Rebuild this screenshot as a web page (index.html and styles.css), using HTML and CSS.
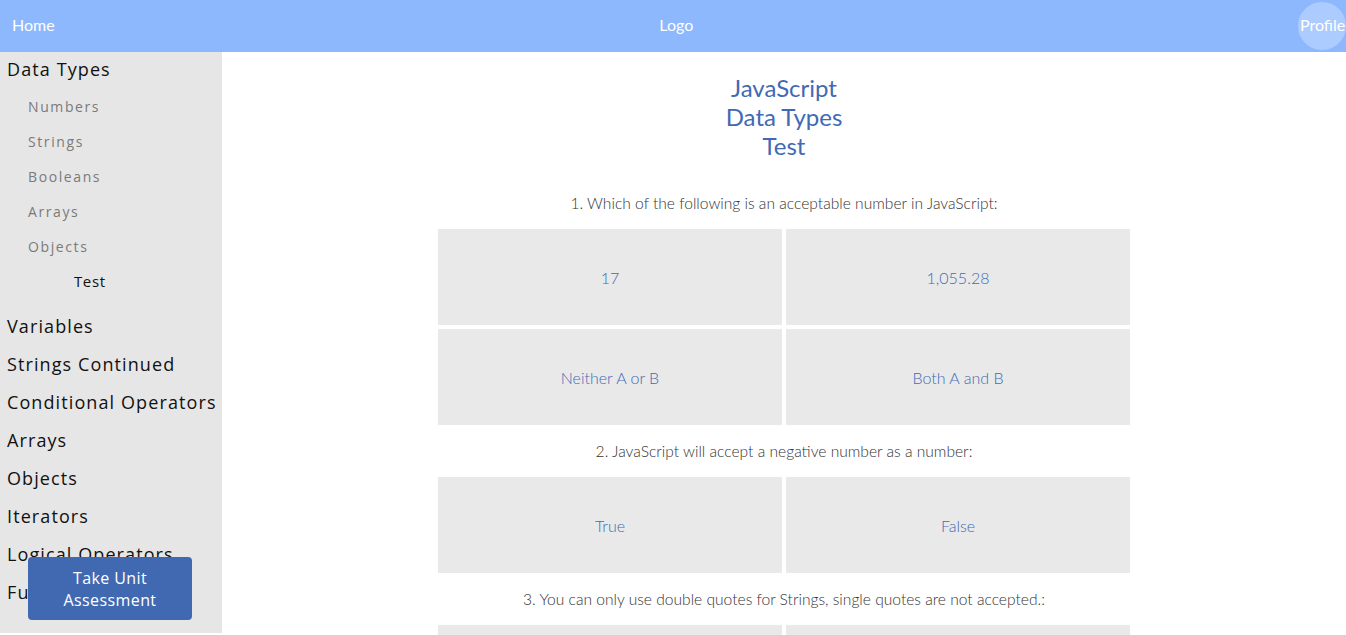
FILE: index.html
```html
<!DOCTYPE html>
<html>
<head>
<meta charset="utf-8">
<link rel="stylesheet" href="styles.css">
</head>
<body>
<header class="topbar">
  <a class="nav-link" href="#">Home</a>
  <a class="nav-link logo" href="#">Logo</a>
  <a class="profile" href="#">Profile</a>
</header>
<div class="layout">
  <nav class="sidebar">
    <div class="topic">Data Types</div>
    <ul class="sublist">
      <li>Numbers</li>
      <li>Strings</li>
      <li>Booleans</li>
      <li>Arrays</li>
      <li>Objects</li>
      <li class="test">Test</li>
    </ul>
    <div class="topics">
      <div class="topic">Variables</div>
      <div class="topic">Strings Continued</div>
      <div class="topic">Conditional Operators</div>
      <div class="topic">Arrays</div>
      <div class="topic">Objects</div>
      <div class="topic">Iterators</div>
      <div class="topic">Logical Operators</div>
      <div class="topic">Functions</div>
    </div>
  </nav>
  <main class="content">
    <h1 class="title">JavaScript<br>Data Types<br>Test</h1>
    <section class="quiz">
      <p class="question">1. Which of the following is an acceptable number in JavaScript:</p>
      <div class="answers">
        <div class="answer">17</div>
        <div class="answer">1,055.28</div>
        <div class="answer">Neither A or B</div>
        <div class="answer">Both A and B</div>
      </div>
      <p class="question">2. JavaScript will accept a negative number as a number:</p>
      <div class="answers">
        <div class="answer">True</div>
        <div class="answer">False</div>
      </div>
      <p class="question">3. You can only use double quotes for Strings, single quotes are not accepted.:</p>
      <div class="answers">
        <div class="answer">True</div>
        <div class="answer">False</div>
      </div>
    </section>
  </main>
</div>
<a class="assess-btn" href="#">Take Unit<br>Assessment</a>
</body>
</html>
```

FILE: styles.css
```css
* { box-sizing: border-box; }
html, body { margin: 0; padding: 0; }
body {
  font-family: "Lato", "Liberation Sans", sans-serif;
  background: #ffffff;
  color: #222;
}
a { text-decoration: none; }

.topbar {
  height: 52px;
  background: #8db8fe;
  display: flex;
  align-items: center;
  justify-content: space-between;
  padding-left: 12px;
  overflow: hidden;
}
.nav-link {
  color: #ffffff;
  font-size: 16px;
  font-family: "Lato", sans-serif;
  margin-bottom: 4px;
}
.profile {
  width: 48px;
  height: 48px;
  border-radius: 50%;
  background: rgba(255, 255, 255, 0.28);
  color: #fff;
  font-size: 16px;
  display: flex;
  align-items: center;
  padding-left: 2px;
  padding-bottom: 4px;
  white-space: nowrap;
}

.layout {
  display: flex;
  align-items: flex-start;
}
.sidebar {
  width: 222px;
  flex: 0 0 222px;
  height: 581px;
  background: #e6e6e6;
  overflow: hidden;
  padding-left: 7px;
  font-family: "Open Sans", sans-serif;
}
.topic {
  font-size: 18px;
  line-height: 34px;
  color: #111;
  letter-spacing: 1.1px;
  white-space: nowrap;
}
.sublist {
  list-style: none;
  margin: 3px 0 0;
  padding: 0 0 0 21px;
}
.sublist li {
  font-size: 14px;
  line-height: 35px;
  color: #7a7a7a;
  letter-spacing: 1.6px;
}
.sublist li.test {
  color: #111;
  font-size: 15px;
  padding-left: 46px;
  letter-spacing: 0.6px;
}
.topics {
  margin-top: 8px;
}
.topics .topic {
  line-height: 38px;
}

.content {
  flex: 1;
  min-width: 0;
  padding-top: 21px;
}
.title {
  margin: 0 0 17px;
  text-align: center;
  font-weight: 400;
  font-size: 24px;
  line-height: 29px;
  color: #4169b5;
}
.quiz {
  width: 692px;
  margin: 0 auto;
}
.question {
  margin: 0;
  height: 52px;
  display: flex;
  align-items: center;
  justify-content: center;
  font-size: 15.6px;
  font-weight: 300;
  color: #333;
}
.answers {
  display: grid;
  grid-template-columns: 1fr 1fr;
  gap: 4px;
}
.answer {
  height: 96px;
  background: #e9e9e9;
  display: flex;
  align-items: center;
  justify-content: center;
  font-size: 16px;
  font-weight: 300;
  color: #4169b5;
}

.assess-btn {
  position: fixed;
  left: 28px;
  top: 557px;
  width: 164px;
  height: 63px;
  border-radius: 4px;
  background: #4169b2;
  color: #fff;
  font-family: "Open Sans", sans-serif;
  font-size: 16px;
  font-weight: 500;
  line-height: 22px;
  letter-spacing: 0.4px;
  display: flex;
  align-items: center;
  justify-content: center;
  text-align: center;
}
```
